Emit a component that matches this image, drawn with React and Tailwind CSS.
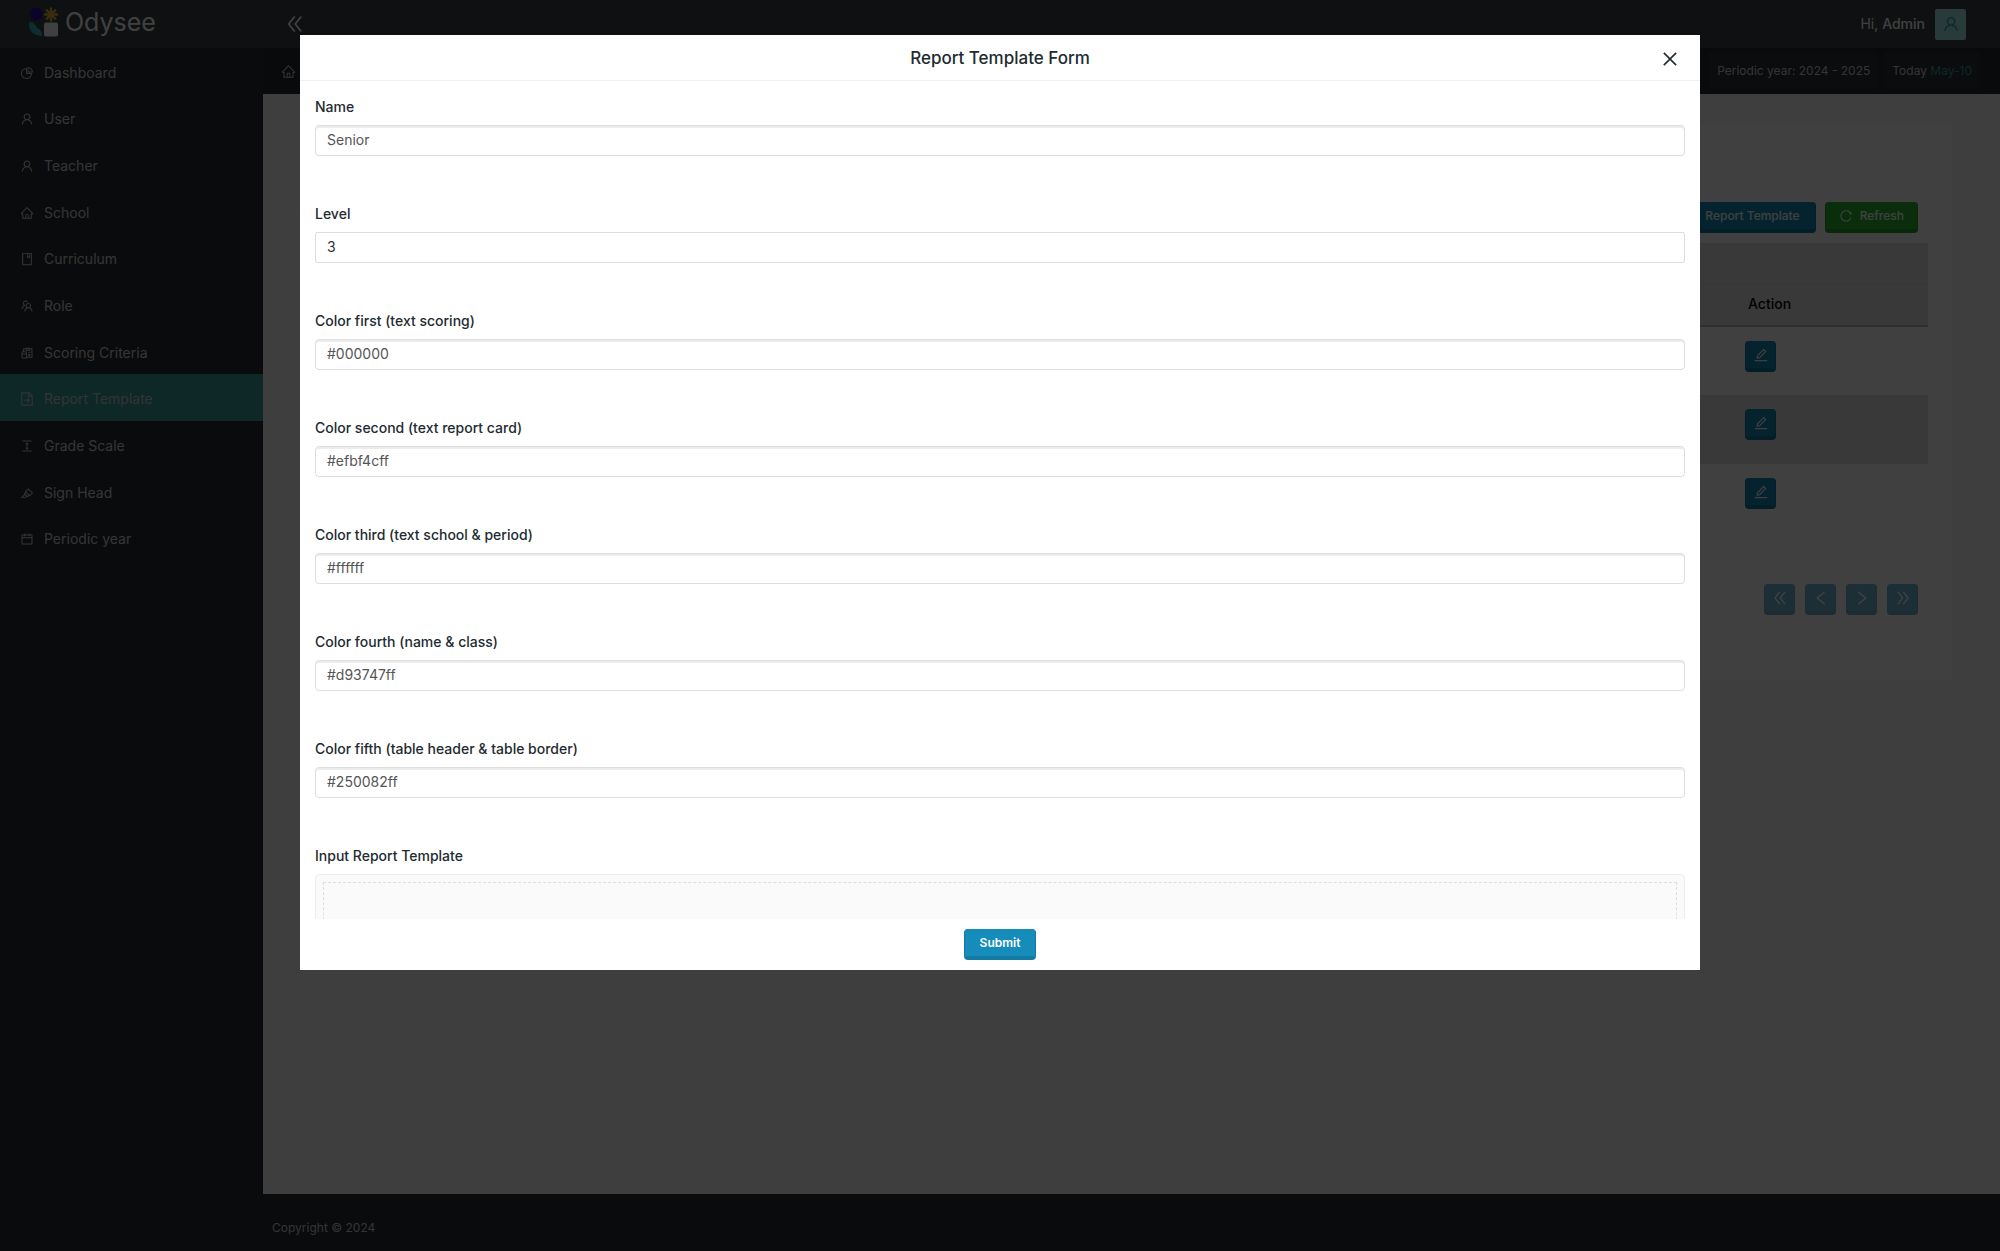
import React from 'react';
import {
  AiOutlineBook,
  AiOutlineCalendar,
  AiOutlineClose,
  AiOutlineColumnHeight,
  AiOutlineDoubleLeft,
  AiOutlineDoubleRight,
  AiOutlineEdit,
  AiOutlineHighlight,
  AiOutlineHome,
  AiOutlineLeft,
  AiOutlinePieChart,
  AiOutlineReconciliation,
  AiOutlineReload,
  AiOutlineRight,
  AiOutlineTeam,
  AiOutlineUser,
} from 'react-icons/ai';

// Document with a folded corner and an outgoing arrow
const FileExportIcon = ({ className }) => (
  <svg viewBox="0 0 16 16" fill="none" stroke="currentColor" strokeWidth="1.2" className={className}>
    <path d="M2 1h8.500L14 4.500V15H2z" />
    <path d="M10 1v4h4" />
    <path d="M4.500 9.500h6M8.500 7.200l2.300 2.300-2.300 2.300" />
  </svg>
);

const menu = [
  { label: 'Dashboard', icon: AiOutlinePieChart },
  { label: 'User', icon: AiOutlineUser },
  { label: 'Teacher', icon: AiOutlineUser },
  { label: 'School', icon: AiOutlineHome },
  { label: 'Curriculum', icon: AiOutlineBook },
  { label: 'Role', icon: AiOutlineTeam },
  { label: 'Scoring Criteria', icon: AiOutlineReconciliation },
  { label: 'Report Template', icon: FileExportIcon, active: true },
  { label: 'Grade Scale', icon: AiOutlineColumnHeight },
  { label: 'Sign Head', icon: AiOutlineHighlight },
  { label: 'Periodic year', icon: AiOutlineCalendar },
];

const fields = [
  { id: 'name', label: 'Name', value: 'Senior' },
  { id: 'level', label: 'Level', value: '3', plain: true },
  { id: 'color1', label: 'Color first (text scoring)', value: '#000000' },
  { id: 'color2', label: 'Color second (text report card)', value: '#efbf4cff' },
  { id: 'color3', label: 'Color third (text school & period)', value: '#ffffff' },
  { id: 'color4', label: 'Color fourth (name & class)', value: '#d93747ff' },
  { id: 'color5', label: 'Color fifth (table header & table border)', value: '#250082ff' },
];

const pager = [
  { label: 'First page', icon: AiOutlineDoubleLeft },
  { label: 'Previous page', icon: AiOutlineLeft },
  { label: 'Next page', icon: AiOutlineRight },
  { label: 'Last page', icon: AiOutlineDoubleRight },
];

// --- Layout ---

const Logo = () => (
  <a href="#" className="flex items-center gap-1.5 text-white">
    <svg viewBox="0 0 31 30" className="h-[30px] w-[31px]">
      <circle cx="8" cy="7" r="6.5" fill="#2c12a0" />
      <g stroke="#e8b43c" strokeWidth="2.4" strokeLinecap="round">
        <path d="M23 1.500v12M17 7.500h12M18.800 3.300l8.400 8.400M27.200 3.300l-8.400 8.400" />
      </g>
      <path d="M1 15.500c5-1 6 3 8 5s5 2 5 8.500C6 29 0 24 1 15.500z" fill="#36b4bc" />
      <rect x="16" y="15.500" width="14" height="14" rx="2" fill="#fff" />
    </svg>
    <span className="text-[25px] leading-8">Odysee</span>
  </a>
);

const Sidebar = () => (
  <aside className="flex w-[263px] shrink-0 flex-col bg-[#2b2e31]">
    <div className="h-12 bg-[#394246] pl-7 pt-1.5">
      <Logo />
    </div>
    <nav className="grid h-[513px] auto-rows-fr">
      {menu.map(({ label, icon: Icon, active }) => (
        <a
          key={label}
          href="#"
          className={
            active
              ? 'flex items-center gap-[10px] bg-[#34a09c] pl-5 pt-[3px] text-[#c8d0cc]'
              : 'flex items-center gap-[10px] pl-5 pt-[3px] text-[#d4d4d4]'
          }
        >
          <Icon className="size-[14px]" />
          {label}
        </a>
      ))}
    </nav>
  </aside>
);

const Topbar = () => (
  <header className="flex h-12 items-center justify-between bg-[#3c4245] pl-[21px] pr-[34px] text-white">
    <button type="button" aria-label="Collapse menu">
      <AiOutlineDoubleLeft className="size-[22px]" />
    </button>
    <div className="flex items-center gap-[10px]">
      <span>
        Hi, <span className="font-medium">Admin</span>
      </span>
      <button type="button" aria-label="Account" className="flex size-[31px] items-center justify-center rounded-[2px] bg-[#a0e8e8] text-[#34a09c]">
        <AiOutlineUser className="size-[18px]" />
      </button>
    </div>
  </header>
);

const Breadcrumb = () => (
  <div className="flex h-[46px] items-center justify-between bg-[#272a2e] pl-[18px] pr-5 text-[#cfcfcf]">
    <a href="#" aria-label="Home">
      <AiOutlineHome className="size-[15px]" />
    </a>
    <div className="flex gap-1.5 text-xs">
      <span className="bg-[#2e3236] px-2 py-[10px]">Periodic year: 2024 - 2025</span>
      <span className="bg-[#2e3236] px-2 py-[10px]">
        Today <span className="text-[#34a09c]">May-10</span>
      </span>
    </div>
  </div>
);

// --- Template list ---

const TemplateTable = () => (
  <table className="w-full border-collapse text-left">
    <thead className="bg-[#e4e4e4]">
      <tr className="h-[41px] border-b border-[#d6d6d6]">
        <td colSpan={2} />
      </tr>
      <tr className="h-[42px] border-b-2 border-[#b8b8b8]">
        <td />
        <th scope="col" className="w-[228px] pb-0.5 pl-12 font-medium text-black">
          Action
        </th>
      </tr>
    </thead>
    <tbody>
      {[1, 2, 3].map((row) => (
        <tr key={row} className="h-[69px] even:bg-[#e2e2e2]">
          <td />
          <td className="pl-[45px] pt-[14px] align-top">
            <button
              type="button"
              aria-label="Edit template"
              className="flex size-[31px] items-center justify-center rounded border-x border-b-4 border-[#1179a0] bg-[#158cba] text-white"
            >
              <AiOutlineEdit className="size-4" />
            </button>
          </td>
        </tr>
      ))}
    </tbody>
  </table>
);

const TemplateList = () => (
  <section className="h-[556px] bg-white px-6 pt-[78px]">
    <div className="mb-[10px] flex justify-end gap-[9px] pr-[10px] text-xs font-medium text-white">
      <button type="button" className="h-[31px] rounded border-x border-b-4 border-[#1179a0] bg-[#158cba] px-[15px]">
        Report Template
      </button>
      <button
        type="button"
        className="flex h-[31px] items-center gap-[7px] rounded border-x border-b-4 border-[#23a127] bg-[#28b62c] px-[13px]"
      >
        <AiOutlineReload className="size-[14px]" />
        Refresh
      </button>
    </div>
    <TemplateTable />
    <div className="mt-[51px] flex justify-end gap-[10px] pr-[10px]">
      {pager.map(({ label, icon: Icon }) => (
        <button
          key={label}
          type="button"
          disabled
          aria-label={label}
          className="flex size-[31px] items-center justify-center rounded border-x border-b-4 border-[#1179a0] bg-[#158cba] text-white opacity-60"
        >
          <Icon className="size-[18px]" />
        </button>
      ))}
    </div>
  </section>
);

// --- Form dialog ---

const Field = ({ id, label, value, plain }) => (
  <div className="mb-[46px]">
    <label htmlFor={id} className="mb-1.5 block font-medium leading-6 text-[#222b30]">
      {label}
    </label>
    <input
      id={id}
      type="text"
      defaultValue={value}
      className={
        plain
          ? 'block h-[31px] w-full rounded-[2px] border border-[#dedede] px-[11px] pb-0.5 text-[#333333] outline-none'
          : 'block h-[31px] w-full rounded border border-[#dedede] px-[11px] pb-0.5 text-[#555555] shadow-[inset_0_2px_0_rgba(0,0,0,0.075)] outline-none'
      }
    />
  </div>
);

const FormDialog = () => (
  <div
    role="dialog"
    aria-modal="true"
    aria-labelledby="form-title"
    className="w-[70%] bg-white text-[#222b30]"
  >
    <div className="grid h-[46px] grid-cols-[1fr_auto_1fr] items-center border-b border-[#f0f0f0] px-5 pt-0.5">
      <h2 id="form-title" className="col-start-2 text-[17px] font-medium">
        Report Template Form
      </h2>
      <button type="button" aria-label="Close" className="justify-self-end">
        <AiOutlineClose className="size-5" />
      </button>
    </div>
    <form id="template-form" className="h-[67vh] overflow-hidden px-[15px] pt-[14px]">
      {fields.map((field) => (
        <Field key={field.id} {...field} />
      ))}
      <label htmlFor="template-file" className="mb-1.5 block font-medium leading-6">
        Input Report Template
      </label>
      <div className="rounded border border-[#eeeeee] bg-[#fafafa] p-[7px]">
        <div className="h-40 border border-dashed border-[#dddddd]">
          <input id="template-file" type="file" className="size-full opacity-0" />
        </div>
      </div>
    </form>
    <div className="flex justify-center py-[10px]">
      <button
        type="submit"
        form="template-form"
        className="h-[31px] rounded border-x border-b-4 border-[#127ba3] bg-[#158cba] px-[15px] text-xs font-semibold text-white"
      >
        Submit
      </button>
    </div>
  </div>
);

function App() {
  return (
    <div className="font-['Inter','Liberation_Sans',sans-serif] text-sm">
      <div className="flex min-h-screen">
        <Sidebar />
        <div className="flex min-w-0 flex-1 flex-col">
          <Topbar />
          <Breadcrumb />
          <main className="flex-1 bg-[#f6f6f6] px-12 py-[30px]">
            <TemplateList />
          </main>
          <footer className="h-[57px] bg-[#2b2e31] px-[9px] pt-[26px] text-xs text-[#cfcfcf]">
            Copyright © 2024
          </footer>
        </div>
      </div>
      <div className="fixed inset-0 flex items-start justify-center bg-black/75 pt-[35px]">
        <FormDialog />
      </div>
    </div>
  );
}

export default App;
